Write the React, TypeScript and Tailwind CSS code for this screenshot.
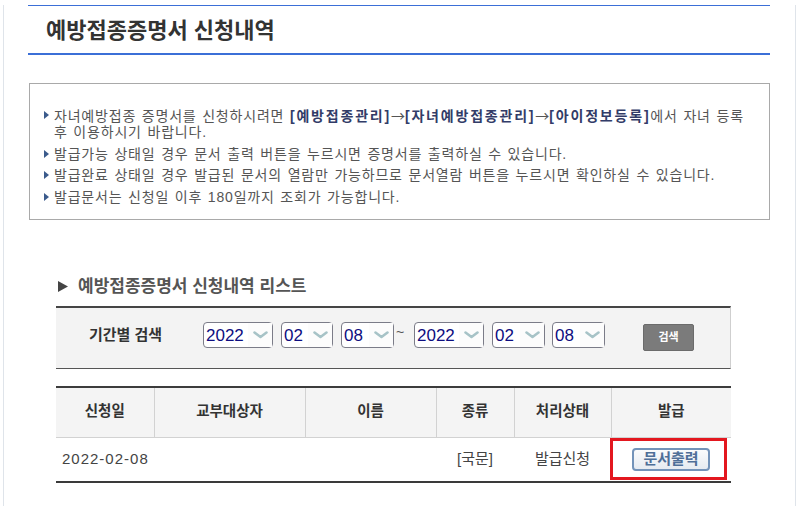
import React from 'react';

const FONT = "font-['Liberation_Sans','Noto_Sans_CJK_KR',sans-serif]";

const Bullet = () => (
  <svg width="5" height="8" viewBox="0 0 5 8" className="mr-[5px] mt-[4px] shrink-0">
    <path d="M0 0 L5 4 L0 8 Z" fill="#3b5b8c" />
  </svg>
);

const Chevron = () => (
  <svg width="15" height="8" viewBox="0 0 15 8">
    <path d="M1.5 1.5 L7.5 6 L13.5 1.5" fill="none" stroke="#a7c3c7" strokeWidth="2.6" strokeLinecap="round" strokeLinejoin="round" />
  </svg>
);

const Select: React.FC<{ value: string; className?: string }> = ({ value, className }) => (
  <div className={`flex h-[26px] shrink-0 items-center rounded-[4px] border border-[#7b7c88] bg-white ${className ?? ''}`}>
    <span className="pl-[2px] text-[17px] leading-none text-[#0d0d80]">{value}</span>
    <span className="ml-auto flex h-full w-[24px] items-center justify-center bg-[#fcfcfc]">
      <Chevron />
    </span>
  </div>
);

const B: React.FC<{ children: React.ReactNode }> = ({ children }) => (
  <b className="font-bold tracking-[1.8px] text-[#323c68]">{children}</b>
);

const Arrow = () => <span className="font-['Noto_Sans_CJK_KR',sans-serif] tracking-normal">→</span>;

const App: React.FC = () => {
  const cols = [
    { name: '신청일', w: 'w-[98px]' },
    { name: '교부대상자', w: 'w-[151px]' },
    { name: '이름', w: 'w-[131px]' },
    { name: '종류', w: 'w-[78px]' },
    { name: '처리상태', w: 'w-[97px]' },
    { name: '발급', w: 'w-[120px]' },
  ];

  return (
    <div className={`h-[506px] w-[800px] overflow-hidden bg-white ${FONT}`}>
      <div className="ml-[3px] h-[506px] w-[793px] border-x border-[#dfe4ea] pl-[24px]">
        {/* Page title */}
        <div className="mt-[5px] flex h-[50px] w-[742px] items-center border-t border-b-2 border-[#3b6fd7] pl-[18px]">
          <h1 className="pt-[2px] text-[22px] font-bold leading-none text-[#333]">예방접종증명서 신청내역</h1>
        </div>

        {/* Notice box */}
        <div className="mt-[28px] ml-px h-[137px] w-[741px] border border-[#a9a9a9] pl-[14px] pt-[23px] text-[14px] leading-[16px] tracking-[0.8px] text-[#555] [word-spacing:1px]">
          <ul className="flex flex-col gap-[5.5px]">
            <li className="flex">
              <Bullet />
              <span>
                자녀예방접종 증명서를 신청하시려면 <B>[예방접종관리]</B>
                <Arrow />
                <B>[자녀예방접종관리]</B>
                <Arrow />
                <B>[아이정보등록]</B>에서 자녀 등록
                <br />후 이용하시기 바랍니다.
              </span>
            </li>
            <li className="flex">
              <Bullet />
              <span>발급가능 상태일 경우 문서 출력 버튼을 누르시면 증명서를 출력하실 수 있습니다.</span>
            </li>
            <li className="flex">
              <Bullet />
              <span>발급완료 상태일 경우 발급된 문서의 열람만 가능하므로 문서열람 버튼을 누르시면 확인하실 수 있습니다.</span>
            </li>
            <li className="flex">
              <Bullet />
              <span>발급문서는 신청일 이후 180일까지 조회가 가능합니다.</span>
            </li>
          </ul>
        </div>

        {/* List subtitle */}
        <div className="mt-[56px] flex h-[20px] items-center pl-[30px]">
          <svg width="10" height="11" viewBox="0 0 10 11" className="mr-[10px]">
            <path d="M0 0 L10 5.5 L0 11 Z" fill="#444" />
          </svg>
          <h2 className="text-[17px] font-bold leading-none text-[#555]">예방접종증명서 신청내역 리스트</h2>
        </div>

        {/* Search bar */}
        <div className="mt-[10px] ml-[28px] flex h-[63px] w-[675px] items-start border-t-2 border-b border-r border-t-[#454545] border-b-[#555] border-r-[#cfcfcf] bg-[#f3f3f3] pl-[33px] pt-[14px]">
          <span className="flex h-[26px] w-[114px] shrink-0 items-center text-[15px] font-bold text-[#333]">기간별 검색</span>
          <Select value="2022" className="w-[70px]" />
          <Select value="02" className="ml-[8px] w-[52px]" />
          <Select value="08" className="ml-[8px] w-[53px]" />
          <span className="flex h-[20px] w-[20px] shrink-0 items-center pl-[2px] text-[14px] text-[#555]">~</span>
          <Select value="2022" className="w-[70px]" />
          <Select value="02" className="ml-[8px] w-[53px]" />
          <Select value="08" className="ml-[7px] w-[53px]" />
          <button className="ml-[38px] mt-[2px] flex h-[27px] w-[51px] shrink-0 items-center justify-center rounded-[2px] border border-[#6b6b6b] bg-[#7b7b7b] text-[11px] font-bold text-white">
            검색
          </button>
        </div>

        {/* Result table */}
        <table className="mt-[17px] ml-[28px] w-[675px] table-fixed border-collapse">
          <colgroup>
            {cols.map((c) => (
              <col key={c.name} className={c.w} />
            ))}
          </colgroup>
          <thead>
            <tr className="h-[50px] border-t-2 border-b border-t-[#3c3c3c] border-b-[#d2d2d2] bg-[#f4f4f4]">
              {cols.map((c, i) => (
                <th
                  key={c.name}
                  className={`text-center text-[14.5px] font-bold text-[#333] ${i > 0 ? 'border-l border-[#d2d2d2]' : ''}`}
                >
                  {c.name}
                </th>
              ))}
            </tr>
          </thead>
          <tbody>
            <tr className="h-[45px] border-b-2 border-[#3a3a3a] text-[15px] text-[#444]">
              <td className="pl-[6px] tracking-[1px]">2022-02-08</td>
              <td></td>
              <td></td>
              <td className="text-center">[국문]</td>
              <td className="text-center">발급신청</td>
              <td className="relative text-center">
                <button className="mx-auto flex h-[23px] w-[78px] items-center justify-center rounded-[4px] border-2 border-[#7393b9] bg-gradient-to-b from-[#fafbfc] to-[#e6ebf1] text-[15px] font-bold text-[#4f6f98]">
                  문서출력
                </button>
                <div className="absolute left-[-1px] top-0 h-[42px] w-[117px] border-[3px] border-[#e3171f]" />
              </td>
            </tr>
          </tbody>
        </table>
      </div>
    </div>
  );
};

export default App;
